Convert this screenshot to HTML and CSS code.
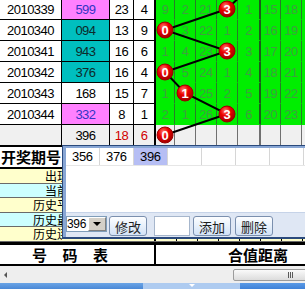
FILE: index.html
```html
<!DOCTYPE html>
<html lang="zh-CN">
<head>
    <meta charset="UTF-8">
    <title>号码表</title>
    <link rel="stylesheet" href="styles.css">
</head>
<body>
<div class="sheet">
    <!-- 走势表 -->
    <div class="grid">
        <div class="row">
            <div class="cell date">2010339</div><div class="cell num pink">599</div><div class="cell sum">23</div><div class="cell tail">4</div>
            <div class="cell g g-first">9</div><div class="cell g">2</div><div class="cell g">21</div><div class="cell g"></div><div class="cell g g-split">1</div><div class="cell g g-narrow">15</div><div class="cell g">18</div><div class="cell g g-end"></div>
        </div>
        <div class="row">
            <div class="cell date">2010340</div><div class="cell num teal">094</div><div class="cell sum">13</div><div class="cell tail">9</div>
            <div class="cell g g-first"></div><div class="cell g">3</div><div class="cell g">22</div><div class="cell g">1</div><div class="cell g g-split">2</div><div class="cell g g-narrow">16</div><div class="cell g">19</div><div class="cell g g-end"></div>
        </div>
        <div class="row">
            <div class="cell date">2010341</div><div class="cell num teal">943</div><div class="cell sum">16</div><div class="cell tail">6</div>
            <div class="cell g g-first">1</div><div class="cell g">4</div><div class="cell g">23</div><div class="cell g"></div><div class="cell g g-split">3</div><div class="cell g g-narrow">17</div><div class="cell g">20</div><div class="cell g g-end"></div>
        </div>
        <div class="row">
            <div class="cell date">2010342</div><div class="cell num teal">376</div><div class="cell sum">16</div><div class="cell tail">4</div>
            <div class="cell g g-first"></div><div class="cell g">5</div><div class="cell g">24</div><div class="cell g">1</div><div class="cell g g-split">4</div><div class="cell g g-narrow">18</div><div class="cell g">21</div><div class="cell g g-end"></div>
        </div>
        <div class="row">
            <div class="cell date">2010343</div><div class="cell num">168</div><div class="cell sum">15</div><div class="cell tail">7</div>
            <div class="cell g g-first">1</div><div class="cell g"></div><div class="cell g">25</div><div class="cell g">2</div><div class="cell g g-split">5</div><div class="cell g g-narrow">19</div><div class="cell g">22</div><div class="cell g g-end"></div>
        </div>
        <div class="row">
            <div class="cell date">2010344</div><div class="cell num pink">332</div><div class="cell sum">8</div><div class="cell tail">1</div>
            <div class="cell g g-first">2</div><div class="cell g">1</div><div class="cell g">26</div><div class="cell g"></div><div class="cell g g-split">6</div><div class="cell g g-narrow">20</div><div class="cell g">23</div><div class="cell g g-end"></div>
        </div>
        <div class="row total">
            <div class="cell date"></div><div class="cell num">396</div><div class="cell sum red">18</div><div class="cell tail red">6</div>
            <div class="cell g g-first"></div><div class="cell g"></div><div class="cell g"></div><div class="cell g"></div><div class="cell g g-split"></div><div class="cell g g-narrow"></div><div class="cell g"></div><div class="cell g g-end"></div>
        </div>

        <!-- 连线和号码球 -->
        <svg class="trend" width="305" height="146" viewBox="0 0 305 146">
            <defs>
                <radialGradient id="ball" cx="40%" cy="30%" r="70%">
                    <stop offset="0%" stop-color="#ff8070"/>
                    <stop offset="45%" stop-color="#ec0000"/>
                    <stop offset="100%" stop-color="#a00000"/>
                </radialGradient>
            </defs>
            <polyline class="trend-line" points="248,-10 227,10 165,31 227,52 165,73 185,94 227,115 165,136"/>
            <g class="ball"><circle cx="227" cy="10" r="8"/><text x="227" y="10">3</text></g>
            <g class="ball"><circle cx="165" cy="31" r="8"/><text x="165" y="31">0</text></g>
            <g class="ball"><circle cx="227" cy="52" r="8"/><text x="227" y="52">3</text></g>
            <g class="ball"><circle cx="165" cy="73" r="8"/><text x="165" y="73">0</text></g>
            <g class="ball"><circle cx="185" cy="94" r="8"/><text x="185" y="94">1</text></g>
            <g class="ball"><circle cx="227" cy="115" r="8"/><text x="227" y="115">3</text></g>
            <g class="ball"><circle cx="165" cy="136" r="8"/><text x="165" y="136">0</text></g>
        </svg>
    </div>

    <div class="head">
        <div class="head-label">开奖期号</div>
        <div class="head-rest"></div>
    </div>

    <!-- 统计行（右半部分被弹窗遮住） -->
    <div class="info yellow"><div class="info-label"><span class="info-text">出现次数</span></div><div class="info-hidden"></div><div class="info-cells"></div></div>
    <div class="info cyan"><div class="info-label"><span class="info-text">当前遗漏</span></div><div class="info-hidden"></div><div class="info-cells"></div></div>
    <div class="info yellow"><div class="info-label"><span class="info-text">历史平均值</span></div><div class="info-hidden"></div><div class="info-cells"></div></div>
    <div class="info cyan"><div class="info-label"><span class="info-text">历史最大值</span></div><div class="info-hidden"></div><div class="info-cells"></div></div>
    <div class="info yellow"><div class="info-label"><span class="info-text">历史连出值</span></div><div class="info-hidden"></div><div class="info-cells"></div></div>

    <div class="title">
        <div class="title-left">号 码 表</div>
        <div class="title-right">合值距离</div>
    </div>

    <!-- 滚动条 -->
    <div class="hscroll">
        <span class="arrow-left"></span>
        <div class="thumb"><span class="grip"></span></div>
    </div>

    <div class="tabs">
        <div class="tab-a"></div>
        <div class="tab-b"><span class="tab-arrow"></span></div>
        <div class="tab-c"></div>
    </div>

    <!-- 号码选择弹窗 -->
    <div class="popup">
        <div class="popup-list">
            <div class="list-row">
                <span class="item">356</span>
                <span class="item">376</span>
                <span class="item sel">396</span>
                <span class="item"></span>
                <span class="item"></span>
                <span class="item"></span>
                <span class="item"></span>
            </div>
        </div>
        <div class="popup-bar">
            <div class="combo"><span class="combo-text">396</span><span class="combo-btn"><i class="caret"></i></span></div>
            <button class="btn btn-edit">修改</button>
            <input class="field" type="text">
            <button class="btn btn-add">添加</button>
            <button class="btn btn-del">删除</button>
        </div>
    </div>
</div>
</body>
</html>
```

FILE: styles.css
```css
body {
    margin: 0;
    background: #ffffff;
    font-family: "Liberation Sans", "Noto Sans CJK SC", sans-serif;
}

.sheet {
    position: relative;
    width: 305px;
    height: 289px;
    overflow: hidden;
}

/* 走势表 */
.grid {
    position: relative;
    width: 360px;
    margin-top: -1px;
}

.row {
    display: flex;
    height: 21px;
}

.cell {
    box-sizing: border-box;
    flex: none;
    display: flex;
    align-items: center;
    justify-content: center;
    height: 21px;
    border-right: 1px solid #000;
    border-bottom: 1px solid #000;
    font-size: 13px;
    letter-spacing: -0.5px;
    color: #000;
}

.date { width: 62px; }
.num { width: 48px; }
.sum { width: 24px; }
.tail { width: 22px; border-right-width: 2px; }

.pink {
    background-color: #ff80ff;
    color: #3434c4;
}

.teal {
    background-color: #00bfbf;
    color: #0d2a2a;
}

.g {
    width: 21px;
    background-color: #00ee00;
    border-right-color: #2a7a2a;
    border-bottom-color: #00ee00;
    color: #3f9f3f;
}

.g-first { width: 19px; }
.g-split { width: 23px; border-right-width: 2px; border-right-color: #1c5c1c; }
.g-narrow { width: 20px; }
.g-end { width: 60px; }

.total .cell {
    background-color: #f0f0f0;
    border-bottom-color: #000;
}

.total .g {
    border-right-color: #707070;
}

.red {
    color: #d00000;
}

.trend {
    position: absolute;
    left: 0;
    top: 0;
    overflow: visible;
}

.trend-line {
    fill: none;
    stroke: #000;
    stroke-width: 2;
}

.ball circle {
    fill: url(#ball);
    stroke: #9a0000;
    stroke-width: 1;
}

.ball text {
    fill: #ffffff;
    font-family: "Liberation Sans", sans-serif;
    font-weight: bold;
    font-size: 13px;
    text-anchor: middle;
    dominant-baseline: central;
}

/* 开奖期号 */
.head {
    box-sizing: border-box;
    display: flex;
    width: 360px;
    height: 23px;
    border-top: 1px solid #000;
    border-bottom: 2px solid #000;
    background: #fff;
}

.head-label {
    width: 62px;
    padding-left: 1px;
    font-family: "Noto Sans CJK SC", sans-serif;
    font-weight: bold;
    font-size: 15px;
    line-height: 20px;
    white-space: nowrap;
}

.head-rest {
    flex: 1;
}

.info {
    box-sizing: border-box;
    display: flex;
    width: 360px;
    border-bottom: 1px solid #6a6a6a;
}

.yellow {
    height: 15px;
    background-color: #ffffcc;
}

.cyan {
    height: 14px;
    background-color: #ccffff;
}

/* 标签只露出弹窗左边的部分 */
.info-label {
    width: 62px;
    flex: none;
    overflow: hidden;
}

.info-text {
    display: block;
    width: 93px;
    text-align: right;
    font-family: "Noto Sans CJK SC", sans-serif;
    font-size: 12px;
    line-height: 13px;
    white-space: nowrap;
}

.info-hidden {
    box-sizing: border-box;
    width: 94px;
    flex: none;
    border-right: 2px solid #000;
}

.info-cells {
    flex: 1;
    background-image: repeating-linear-gradient(90deg, transparent 0, transparent 20px, #000 20px, #000 21px);
}

/* 号码表 */
.title {
    box-sizing: border-box;
    display: flex;
    width: 360px;
    height: 24px;
    border-top: 3px solid #000;
    border-bottom: 2px solid #000;
    background: #fff;
    font-family: "Noto Sans CJK SC", sans-serif;
    font-weight: bold;
    font-size: 15px;
    line-height: 19px;
}

.title-left {
    box-sizing: border-box;
    width: 156px;
    padding-right: 8px;
    border-right: 2px solid #000;
    text-align: center;
    letter-spacing: 6px;
}

.title-right {
    width: 204px;
    text-align: center;
}

/* 滚动条 */
.hscroll {
    display: flex;
    align-items: center;
    height: 17px;
    background-color: #eeeeee;
}

.arrow-left {
    margin-left: 4px;
    border-top: 3px solid transparent;
    border-bottom: 3px solid transparent;
    border-right: 3px solid #555;
}

.thumb {
    box-sizing: border-box;
    display: flex;
    align-items: center;
    justify-content: center;
    flex: none;
    width: 114px;
    height: 12px;
    margin-left: auto;
    margin-right: -42px;
    border: 1px solid #9c9c9c;
    border-radius: 2px;
    background: linear-gradient(#fafafa, #dcdcdc);
}

.grip {
    width: 1px;
    height: 6px;
    background: #5a5a5a;
    box-shadow: 2px 0 #5a5a5a, -2px 0 #5a5a5a;
}

.tabs {
    display: flex;
    height: 6px;
}

.tab-a {
    width: 143px;
    background: linear-gradient(#6aa4e6, #4a88d6);
}

.tab-b {
    display: flex;
    justify-content: center;
    width: 97px;
    background: #aecbf0;
}

.tab-arrow {
    margin-top: 1px;
    border-left: 3px solid transparent;
    border-right: 3px solid transparent;
    border-top: 3px solid #fff;
    height: 0;
}

.tab-c {
    flex: 1;
    background: linear-gradient(#5a9ae6, #3f82d8);
}

/* 弹窗 */
.popup {
    position: absolute;
    left: 62px;
    top: 145px;
    width: 260px;
    padding: 2px 0 0 3px;
    border: 1px solid #2b4a7c;
    border-bottom-width: 2px;
    background-color: #88a6d4;
}

.popup-list {
    height: 64px;
    background: #fff;
}

.list-row {
    display: flex;
    height: 17px;
    border-bottom: 1px solid #e6e6e6;
}

.item {
    box-sizing: border-box;
    flex: none;
    width: 34px;
    padding-left: 6px;
    border-right: 1px solid #d6d6d6;
    font-size: 13px;
    line-height: 17px;
    letter-spacing: -0.3px;
}

.item.sel {
    background-color: #b6bef4;
}

.popup-bar {
    box-sizing: border-box;
    display: flex;
    align-items: flex-start;
    height: 25px;
    padding-top: 3px;
    border-top: 1px solid #c6d3e8;
    background-color: #dfe7f4;
}

.combo {
    box-sizing: border-box;
    display: flex;
    width: 41px;
    height: 16px;
    border: 1px solid #7f9db9;
    background: #fff;
}

.combo-text {
    width: 21px;
    font-size: 12px;
    line-height: 14px;
    letter-spacing: -0.3px;
}

.combo-btn {
    box-sizing: border-box;
    display: flex;
    align-items: center;
    justify-content: center;
    flex: 1;
    background: #d4d0c8;
    border-top: 1px solid #fff;
    border-left: 1px solid #fff;
    border-right: 1px solid #808080;
    border-bottom: 1px solid #808080;
}

.caret {
    border-left: 4px solid transparent;
    border-right: 4px solid transparent;
    border-top: 4px solid #000;
}

.btn {
    box-sizing: border-box;
    width: 38px;
    height: 20px;
    padding: 0;
    border: 1px solid #7a8fae;
    border-radius: 3px;
    background: linear-gradient(#fdfeff, #d2e2f6);
    font-family: "Noto Sans CJK SC", sans-serif;
    font-size: 13px;
    line-height: 17px;
    color: #1e1e1e;
}

.btn-edit { margin-left: 2px; }
.btn-add { margin-left: 3px; }
.btn-del { margin-left: 4px; }

.field {
    box-sizing: border-box;
    width: 36px;
    height: 20px;
    margin: 0 0 0 7px;
    padding: 0;
    border: 1px solid #a6b6cc;
    background: #fff;
}
```
